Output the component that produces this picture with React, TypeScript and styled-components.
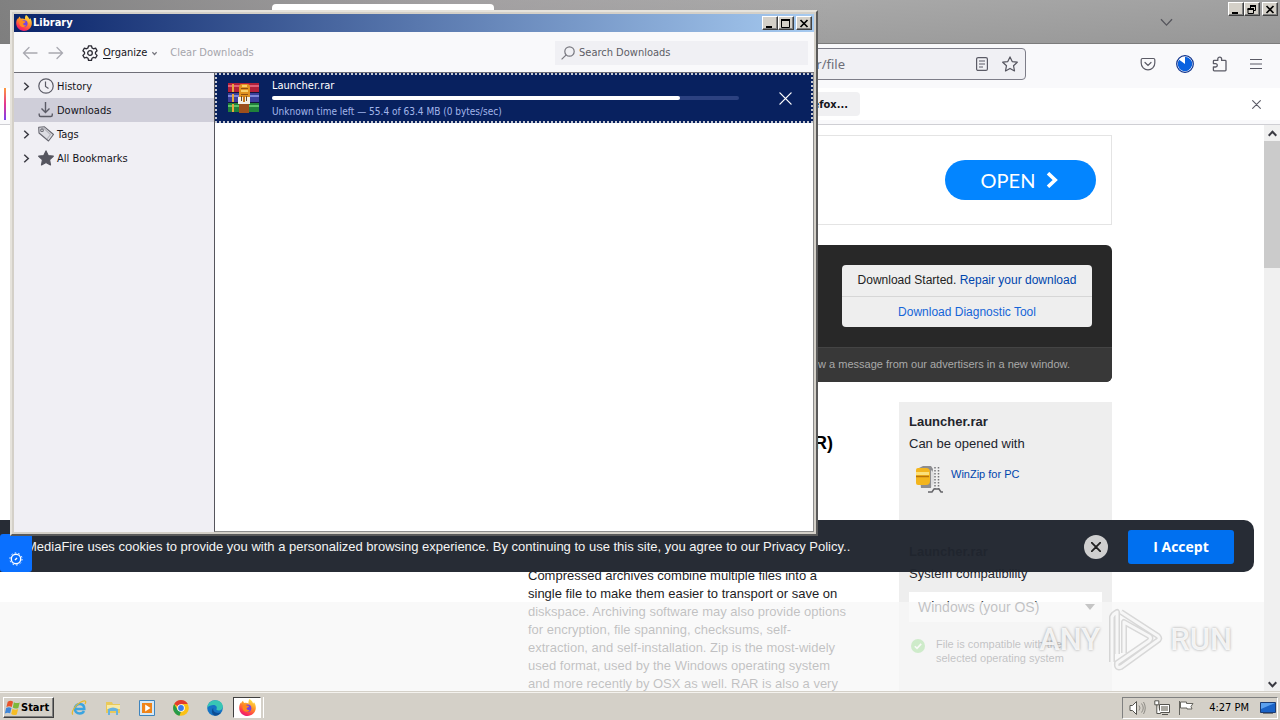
import React from 'react';
import styled, { createGlobalStyle, css } from 'styled-components';

const ui = `"DejaVu Sans Condensed", "Noto Sans", sans-serif`;
const web = `"Liberation Sans", Arial, sans-serif`;

const GlobalStyle = createGlobalStyle`
  *, *::before, *::after { box-sizing: border-box; }
  body { margin: 0; font: 11px/14px ${ui}; color: #15141a; }
  button, input, select { font: inherit; color: inherit; margin: 0; padding: 0; border: 0; background: none; border-radius: 0; }
  h1, h2, p, ul { margin: 0; padding: 0; }
  svg { display: block; flex: none; }
  a { text-decoration: none; }
`;

const Desktop = styled.div`
  position: relative;
  height: 100vh;
  display: flex;
  flex-direction: column;
  overflow: hidden;
  background: #fff;
`;

/* ---------- classic window buttons ---------- */
const ClassicButton = styled.button<{ $gap?: boolean }>`
  width: 16px;
  height: 14px;
  display: grid;
  place-items: center;
  background: #d4d0c8;
  border: 1px solid;
  border-color: #fff #404040 #404040 #fff;
  box-shadow: inset -1px -1px #808080;
  margin-left: ${p => (p.$gap ? '2px' : '0')};
`;
const Controls = styled.div`
  display: flex;
`;

/* ---------- browser ---------- */
const Browser = styled.main`
  flex: 1;
  min-height: 0;
  display: flex;
  flex-direction: column;
`;
const TabStrip = styled.header`
  height: 44px;
  flex: none;
  display: flex;
  justify-content: flex-end;
  align-items: flex-start;
  padding: 2px 2px 0 0;
  border-bottom: 1px solid #7c7c7c;
  background:
    linear-gradient(90deg, rgba(115, 115, 115, 0.8), rgba(150, 145, 148, 0.5) 35%, transparent 65%),
    linear-gradient(176deg, #b6b6b6, #979797);
`;
const ActiveTab = styled.div`
  width: 222px;
  height: 40px;
  margin: 2px auto 0 272px;
  background: #fff;
  border-radius: 4px;
`;
const TabsButton = styled.button`
  margin: 14px 55px 0 0;
`;
const NavBar = styled.nav`
  height: 44px;
  flex: none;
  display: flex;
  align-items: center;
  gap: 20px;
  padding: 0 16px 4px 255px;
  background: #f9f9fb;
`;
const UrlField = styled.label`
  flex: 1;
  height: 32px;
  display: flex;
  align-items: center;
  gap: 13px;
  padding: 0 7px;
  margin-right: 94px;
  border: 1px solid #7d7d88;
  border-radius: 4px;
  background: #f0f0f4;
  color: #5b5b66;
`;
const UrlInput = styled.input`
  flex: 1;
  min-width: 0;
  text-align: right;
  margin-right: 117px;
  font: 13px/18px "Noto Sans", sans-serif;
  color: #6e6e78;
  outline: 0;
`;
const IconButton = styled.button`
  width: 16px;
  height: 20px;
  display: grid;
  place-items: center;
  color: #5b5b66;
`;
const Notice = styled.div`
  height: 37px;
  flex: none;
  display: flex;
  justify-content: space-between;
  align-items: flex-start;
  padding: 0 16px 4px 4px;
  background: linear-gradient(#fff 32px, #f9f9fb 32px);
  border-bottom: 1px solid #cfcfd4;
`;
const NoticeStripe = styled.span`
  width: 2px;
  height: 32px;
  background: linear-gradient(#ff9a3c, #e5358f 50%, #7a3ff0);
`;
const NoticeBody = styled.div`
  width: 854px;
  display: flex;
  justify-content: flex-end;
  padding-top: 4px;
  margin-right: auto;
`;
const NoticeAction = styled.button`
  height: 24px;
  padding: 1px 12px 0;
  border-radius: 4px;
  background: #f0f0f2;
  font-weight: bold;
`;
const NoticeClose = styled(IconButton)`
  margin-top: 6px;
`;

/* ---------- web page ---------- */
const Viewport = styled.div`
  position: relative;
  flex: 1;
  min-height: 0;
  display: flex;
  overflow: hidden;
  background: #fff;
`;
const Page = styled.div`
  position: relative;
  flex: 1;
  overflow: hidden;
  font-family: ${web};
`;
const Container = styled.div`
  max-width: 960px;
  margin: 0 auto;
  padding-top: 10px;
`;
const Scrollbar = styled.div`
  width: 16px;
  display: flex;
  flex-direction: column;
  align-items: center;
  justify-content: space-between;
  background: #f0f0f0;
`;
const ScrollButton = styled.button`
  width: 16px;
  height: 16px;
  display: grid;
  place-items: center;
`;
const Thumb = styled.div`
  width: 16px;
  height: 127px;
  background: #cbcbcb;
  margin-bottom: auto;
`;
const Ad = styled.section`
  height: 90px;
  display: flex;
  align-items: center;
  justify-content: flex-end;
  padding-right: 15px;
  border: 1px solid #e4e4e4;
`;
const OpenButton = styled.button`
  width: 151px;
  height: 40px;
  display: flex;
  align-items: center;
  justify-content: center;
  gap: 9px;
  border-radius: 20px;
  background: #0385ff;
  color: #fff;
  font: 20px/24px Lato, sans-serif;
`;
const DownloadPanel = styled.section`
  margin-top: 20px;
  border-radius: 6px;
  overflow: hidden;
  background: #282828;
`;
const PanelTop = styled.div`
  height: 102px;
  padding: 20px 20px 0;
  display: flex;
  justify-content: flex-end;
`;
const StatusBox = styled.div`
  width: 250px;
  height: 62px;
  border-radius: 4px;
  background: #eee;
  text-align: center;
  font-size: 12px;
  line-height: 31px;
  color: #222;
  overflow: hidden;
`;
const StatusLine = styled.p<{ $rule?: boolean }>`
  ${p => p.$rule && css`
    line-height: 30px;
    border-top: 1px solid #d6d6d6;
  `}
`;
const Link = styled.a<{ $light?: boolean }>`
  color: ${p => (p.$light ? '#1565d8' : '#0045ad')};
`;
const PanelFoot = styled.p`
  height: 35px;
  padding-right: 42px;
  border-top: 1px solid #444;
  background: #383838;
  color: #a9a9a9;
  font-size: 11px;
  line-height: 32px;
  text-align: right;
`;
const Columns = styled.div`
  display: flex;
  justify-content: flex-end;
  gap: 51px;
  padding-top: 20px;
`;
const Article = styled.article`
  width: 320px;
  padding-top: 31px;
  font-size: 13px;
  line-height: 18px;
  color: #1c1c24;
`;
const ArticleTitle = styled.h1`
  padding-right: 15px;
  margin-bottom: 114px;
  text-align: right;
  font-size: 18px;
  line-height: 20px;
  color: #000;
`;
const Aside = styled.aside`
  width: 213px;
  height: 400px;
  padding: 9px 10px;
  background: #eee;
  font-size: 13px;
  line-height: 22px;
  color: #22242c;
`;
const AsideTitle = styled.h2`
  font-size: 13px;
  line-height: 22px;
`;
const AppRow = styled.div`
  height: 86px;
  display: flex;
  gap: 8px;
  padding: 10px 0 0 6px;
  font-size: 11px;
  line-height: 18px;
`;
const OsSelect = styled.div`
  display: flex;
  align-items: center;
  height: 30px;
  margin: 7px 0 15px;
  padding: 0 7px 0 9px;
  background: #fff;
  font-size: 14px;
  select { flex: 1; appearance: none; outline: 0; }
`;
const Compat = styled.div`
  display: flex;
  gap: 10px;
  padding-left: 1px;
  font-size: 11px;
  line-height: 14px;
`;
const Fade = styled.div`
  position: absolute;
  left: 0;
  right: 0;
  bottom: 0;
  height: 90px;
  background: rgba(247, 247, 247, 0.75);
`;
const CookieBar = styled.section`
  position: absolute;
  left: 0;
  right: 10px;
  bottom: 120px;
  height: 52px;
  display: flex;
  align-items: center;
  padding: 2px 20px 0 26px;
  border-radius: 0 10px 10px 0;
  background: rgba(32, 37, 46, 0.97);
  color: #f4f4f4;
`;
const CookieText = styled.p`
  flex: 1;
  font-size: 13px;
  line-height: 18px;
`;
const CookieClose = styled.button`
  width: 24px;
  height: 24px;
  display: grid;
  place-items: center;
  border-radius: 50%;
  background: #cfcfcf;
  margin-right: 20px;
`;
const Accept = styled.button`
  width: 106px;
  height: 34px;
  border-radius: 3px;
  background: #0070f0;
  color: #fff;
  font: bold 14px/18px "Open Sans", sans-serif;
`;
const PrivacyTab = styled.button`
  position: absolute;
  left: 0;
  bottom: 120px;
  width: 32px;
  height: 38px;
  display: grid;
  place-items: center;
  padding: 11px 1px 0 0;
  border-radius: 3px;
  background: #0a70ff;
`;
const Watermark = styled.div`
  position: absolute;
  right: 48px;
  bottom: 48px;
  display: flex;
  align-items: center;
  gap: 7px;
  z-index: 3;
  font: 500 31px/40px Roboto, sans-serif;
  color: rgba(255, 255, 255, 0.85);
  text-shadow: 0 0 3px rgba(0, 0, 0, 0.35);
`;

/* ---------- library window ---------- */
const Library = styled.section`
  position: absolute;
  left: 10px;
  top: 10px;
  width: 808px;
  height: 526px;
  display: flex;
  flex-direction: column;
  padding: 2px;
  border: 2px solid;
  border-color: #e6e3dc #5a5a5a #5a5a5a #e6e3dc;
  background: #d4d0c8;
  z-index: 2;
`;
const TitleBar = styled.header`
  height: 18px;
  flex: none;
  display: flex;
  align-items: center;
  gap: 1px;
  padding: 0 2px;
  background: linear-gradient(90deg, #0a246a, #a6caf0);
  color: #fff;
  font-weight: bold;
  h2 { flex: 1; font-size: 11px; line-height: 14px; }
`;
const Toolbar = styled.div`
  height: 41px;
  flex: none;
  display: flex;
  align-items: center;
  padding: 1px 6px 0 8px;
  background: #f9f9fb;
  border-bottom: 1px solid #6f6f78;
`;
const ToolButton = styled.button`
  display: flex;
  align-items: center;
  gap: 5px;
  margin-right: 10px;
  padding-top: 1px;
  &:disabled { color: #a5a5ab; }
  u { text-underline-offset: 2px; }
`;
const OrganizeButton = styled(ToolButton)`
  margin: 0 13px 0 8px;
`;
const Search = styled.label`
  width: 253px;
  height: 24px;
  margin-left: auto;
  display: flex;
  align-items: center;
  gap: 4px;
  padding: 0 6px;
  background: #f0f0f4;
`;
const SearchInput = styled.input`
  flex: 1;
  padding-top: 1px;
  outline: 0;
  &::placeholder { color: #5d5d66; opacity: 1; }
`;
const Body = styled.div`
  flex: 1;
  display: flex;
  min-height: 0;
`;
const Places = styled.nav`
  width: 200px;
  flex: none;
  padding-top: 1px;
  background: #f0eff4;
`;
const Place = styled.button<{ $selected?: boolean }>`
  width: 100%;
  height: 24px;
  display: flex;
  align-items: center;
  padding-left: 8px;
  background: ${p => (p.$selected ? '#cfced9' : 'transparent')};
`;
const Twisty = styled.span`
  width: 16px;
`;
const PlaceLabel = styled.span`
  margin-left: 3px;
  padding-top: 2px;
`;
const Downloads = styled.div`
  flex: 1;
  background: #fff;
  border: 1px solid #8d8d8d;
  border-left-color: #55555c;
  border-top: 0;
`;
const DownloadRow = styled.article`
  height: 50px;
  display: flex;
  align-items: center;
  padding: 0 18px 0 10px;
  border: 2px dotted #c3c7d2;
  background: #08215f;
  color: #fff;
`;
const DownloadInfo = styled.div`
  flex: 1;
  margin: 0 38px 0 12px;
  padding-top: 2px;
`;
const Track = styled.div`
  height: 4px;
  margin: 3px 0 5px;
  border-radius: 2px;
  background: #2c4180;
`;
const Fill = styled.div`
  height: 4px;
  border-radius: 2px;
  background: #fff;
`;
const DownloadStatus = styled.p`
  color: #a3b6ea;
  font-size: 10px;
`;

/* ---------- taskbar ---------- */
const Taskbar = styled.footer`
  height: 28px;
  flex: none;
  display: flex;
  align-items: center;
  padding: 2px 2px 0 3px;
  background: #d4d0c8;
  border-top: 1px solid #f4f2ee;
  box-shadow: 0 -1px #d4d0c8;
  z-index: 4;
`;
const StartButton = styled.button`
  height: 21px;
  width: 51px;
  display: flex;
  align-items: center;
  border: 1px solid;
  border-color: #fff #404040 #404040 #fff;
  box-shadow: inset -1px -1px #808080;
  font-weight: bold;
  color: #000;
`;
const QuickLaunch = styled.div`
  display: flex;
  gap: 18px;
  margin: 0 10px 0 17px;
`;
const TaskButton = styled.button`
  width: 28px;
  height: 21px;
  display: grid;
  place-items: center;
  background: #fff;
  border: 1px solid;
  border-color: #404040 #fff #fff #404040;
`;
const TaskStack = styled.span`
  width: 3px;
  height: 21px;
  border-right: 1px solid #fff;
`;
const Tray = styled.div`
  height: 22px;
  margin-left: auto;
  display: flex;
  align-items: center;
  gap: 8px;
  padding: 0 1px 0 6px;
  border: 1px solid;
  border-color: #808080 #fff #fff #808080;
  color: #000;
`;
const Clock = styled.time`
  margin: 0 3px 0 7px;
`;

/* ---------- icons ---------- */
const Firefox = ({ size = 16 }: { size?: number }) => (
  <svg width={size} height={size} viewBox="0 0 16 16">
    <defs>
      <linearGradient id="fx" x1="0.8" y1="0" x2="0.3" y2="1">
        <stop offset="0" stopColor="#fff04a" />
        <stop offset="0.45" stopColor="#ff9226" />
        <stop offset="0.8" stopColor="#ff3850" />
        <stop offset="1" stopColor="#e3157f" />
      </linearGradient>
    </defs>
    <path d="M10 0C12 1.500 13 3 13.300 4.200 14 3.600 14 3.200 14 2.800 15.400 4.600 16 6.600 15.800 9 15.400 13 12 16 8 16S.4 13 .2 8.600C.1 6.400.8 4.500 1.600 3.200l.3 1.200C2.200 3.300 3 2.300 3.900 1.600 3.900 2.600 4.300 3.300 5 3.700 6.500 3.400 8 3.600 9 4.300 8.800 2.800 9 1.200 10 0z" fill="url(#fx)" />
    <circle cx="8.200" cy="8.600" r="3.400" fill="#7542e5" />
    <path d="M3.500 6c1.500-1 3-.8 4 0 1 .2 2 .4 2 1-.5 1-2 .8-2.300 1.800C7 10 8.500 10.800 10 10c-.7 2-3 2.600-4.800 1.500C3.400 10.400 2.800 8 3.500 6z" fill="#ff8a1c" />
  </svg>
);
const Min = () => <svg width="10" height="9"><path d="M1 7h6v2H1z" fill="#000" /></svg>;
const Max = () => <svg width="10" height="9"><path d="M.5 1h8v7.500h-8zM0 1h9" fill="none" stroke="#000" strokeWidth="1" /><path d="M0 0h9v2H0z" /></svg>;
const Restore = () => <svg width="10" height="9"><path d="M3.500 3V1h5v4.500H7M1 4h5.500v4.500H1z" fill="none" stroke="#000" /><path d="M3 0h6v2H3zM.5 3H7v2H.5z" /></svg>;
const ClassicX = () => <svg width="10" height="9"><path d="M1.500 1l7 7m0-7l-7 7" stroke="#000" strokeWidth="1.700" /></svg>;
const Cross = ({ size = 10, color = '#5b5b66', w = 1.2 }: { size?: number; color?: string; w?: number }) => (
  <svg width={size} height={size} viewBox="0 0 10 10"><path d="M.7.7l8.600 8.600m0-8.600L.7 9.300" stroke={color} strokeWidth={w} strokeLinecap="round" /></svg>
);
const Arrow = ({ flip }: { flip?: boolean }) => (
  <svg width="16" height="14" viewBox="0 0 16 14"><path d={flip ? 'M1 7h13.500M9 1.500L14.500 7 9 12.500' : 'M15 7H1.500M7 1.500L1.500 7 7 12.500'} fill="none" stroke="#a9a9b0" strokeWidth="1.300" strokeLinecap="round" /></svg>
);
const Gear = () => (
  <svg width="16" height="16" viewBox="0 0 16 16" fill="none" stroke="#2b2a33" strokeWidth="1.300" strokeLinejoin="round">
    <path d="M6.500.8h3l.5 2.100 1.500.9 2.100-.7 1.500 2.600-1.600 1.500v1.700l1.600 1.500-1.500 2.600-2.100-.6-1.500.8-.5 2.100h-3L6 13.200l-1.500-.8-2.100.6-1.500-2.600 1.600-1.500V7.200L.9 5.700l1.500-2.600 2.100.7L6 2.900z" /><circle cx="8" cy="8" r="2.300" />
  </svg>
);
const Chevron = ({ d = 'right', w = 1.3, color = '#3a3a42', size = 8 }: { d?: 'right' | 'down' | 'up'; w?: number; color?: string; size?: number }) => (
  <svg width={size} height={size} viewBox="0 0 8 8"><path d={{ right: 'M2 .6L5.600 4 2 7.400', down: 'M.6 2L4 5.600 7.400 2', up: 'M.6 6L4 2.400 7.400 6' }[d]} fill="none" stroke={color} strokeWidth={w} /></svg>
);
const Clockface = () => <svg width="16" height="16" viewBox="0 0 16 16" fill="none" stroke="#5b5b66" strokeWidth="1.200"><circle cx="8" cy="8" r="7.200" /><path d="M7.500 3.500v5l3 2" /></svg>;
const DownloadIcon = () => <svg width="16" height="16" viewBox="0 0 16 16" fill="none" stroke="#5b5b66" strokeWidth="1.400"><path d="M7.500 0v10.500M3.500 6.500l4 4 4-4M1.200 11.500v1.500q0 1.500 1.500 1.500h10.100q1.500 0 1.500-1.500v-1.500" /></svg>;
const TagIcon = () => <svg width="16" height="16" viewBox="0 0 16 16" fill="#dcdce2" stroke="#66666f" strokeWidth="1.100" strokeLinejoin="round"><path d="M.7 1.200L6.500.8l9 7.700-5 6.500L1 7z" /><path d="M5 1.500l7.500 7-3.300 4.300" fill="none" stroke="#b4b4bb" /><circle cx="4" cy="4.200" r="1.300" fill="#fff" /></svg>;
const StarIcon = ({ filled }: { filled?: boolean }) => <svg width="16" height="16" viewBox="0 0 16 16" fill={filled ? '#55555f' : 'none'} stroke="#55555f" strokeWidth="1.200" strokeLinejoin="round"><path d="M8 .9l2.200 4.700 5.100.6-3.800 3.500 1 5.200L8 12.400l-4.500 2.500 1-5.200L.7 6.200l5.100-.6z" /></svg>;
const SearchIcon = () => <svg width="14" height="14" viewBox="0 0 14 14" fill="none" stroke="#77777f" strokeWidth="1.200"><circle cx="8.500" cy="5.500" r="4.700" /><path d="M5.200 8.800L.6 13.400" /></svg>;
const Reader = () => <svg width="14" height="16" viewBox="0 0 14 16" fill="none" stroke="#5b5b66" strokeWidth="1.200"><rect x="1.600" y="1.600" width="10.800" height="12.800" rx="1.500" /><path d="M4 5h6M4 8h6M4 11h4" /></svg>;
const Pocket = () => <svg width="16" height="16" viewBox="0 0 16 16" fill="none" stroke="#5b5b66" strokeWidth="1.200" strokeLinecap="round"><path d="M2.500 2.500h11q1.300 0 1.300 1.300V7a6.800 6.800 0 0 1-13.600 0V3.800q0-1.300 1.300-1.300z" /><path d="M5 6.500l3 3 3-3" /></svg>;
const Progress = () => <svg width="18" height="18" viewBox="0 0 18 18"><circle cx="9" cy="9" r="8.300" fill="#fff" stroke="#0b2f8a" strokeWidth="1.200" /><path d="M9 9V1.800A7.200 7.200 0 1 1 3.200 4.700z" fill="#0a62e0" /></svg>;
const Puzzle = () => <svg width="16" height="16" viewBox="0 0 16 16" fill="none" stroke="#5b5b66" strokeWidth="1.300" strokeLinejoin="round"><path d="M2.200 14.800q-.8 0-.8-.8v-3h2.200a1.700 1.700 0 0 0 0-3.400H1.400V5.200q0-.8.8-.8h3.600V3a1.900 1.900 0 0 1 3.800 0v1.400h3.600q.8 0 .8.8V14q0 .8-.8.8z" /></svg>;
const Menu = () => <svg width="14" height="12"><path d="M1 1.500h12M1 6h12M1 10.500h12" stroke="#5b5b66" strokeWidth="1.200" /></svg>;
const WinRar = () => (
  <svg width="33" height="32" viewBox="0 0 33 32">
    <path d="M1 1h31v10H1z" fill="#b3203a" /><path d="M1 3h31v2H1z" fill="#df6078" />
    <path d="M1 11h31v10H1z" fill="#3a3f9c" /><path d="M1 13h31v2H1z" fill="#7d86d8" />
    <path d="M1 21h31v9H1z" fill="#20813a" /><path d="M1 23h31v2H1z" fill="#5dc26b" />
    <path d="M1 10h31v1H1zM1 20h31v1H1z" fill="#12143a" />
    <path d="M5 2h2v8H5zM5 12h2v8H5zM5 22h2v8H5z" fill="#e8a63c" />
    <path d="M12 5q0-3 3-3h5q3 0 3 3v11H12z" fill="#e0921f" /><path d="M15 3h5v2h-5zM14 8h7v2h-7z" fill="#f8cf6a" /><path d="M14 6h7v1h-7zM14 12h7v1h-7z" fill="#8f4f12" />
    <path d="M12 22h10v9H12z" fill="#9c4f1c" />
    <path d="M11 15h12v7H11z" fill="#f2efe6" /><path d="M14 14h1v5h-1zM19 14h1v5h-1z" fill="#6c4a28" /><path d="M16 14h2v6h-2z" fill="#c9781a" />
  </svg>
);
const WinZip = () => (
  <svg width="28" height="30" viewBox="0 0 28 30">
    <path d="M4 3l4-2h8l2 3-2 19H6z" fill="#8d8d90" />
    <path d="M1 5q0-2 2-2h8q4 0 4 4v9q0 4-4 4H3q-2 0-2-2z" fill="#f3b51d" />
    <path d="M1 7h13v3H1z" fill="#fbe07a" /><path d="M1 11.500h13" stroke="#b97408" strokeWidth="1.500" />
    <path d="M16 5l3 3v10l-3 4z" fill="#dededf" />
    <path d="M20 2v22M23.500 2v22" stroke="#77777a" strokeWidth="1.500" strokeDasharray="1.500 1.500" />
    <path d="M13 27h4l2-3h5l2 3h2" fill="none" stroke="#66666a" strokeWidth="1.500" />
  </svg>
);
const Check = () => <svg width="16" height="16" viewBox="0 0 16 16"><circle cx="8" cy="9" r="7" fill="#56c846" /><path d="M4.800 9.200l2.200 2.200 4.200-4.500" fill="none" stroke="#fff" strokeWidth="1.600" /></svg>;
const Gearlet = () => <svg width="14" height="14" viewBox="0 0 14 14" fill="none" stroke="#fff"><circle cx="7" cy="7" r="4.700" strokeWidth="1.400" /><circle cx="7" cy="7" r="6.100" strokeWidth="1" strokeDasharray="1.600 2.200" /><path d="M6 8l2-2" strokeWidth="1.500" /></svg>;
const Play = () => (
  <svg width="56" height="64" viewBox="0 0 56 64" fill="none" strokeLinejoin="round">
    <path d="M5 54V9q1-3 5-5v42M14 4l37 24q3 3-1 5L14 59q-5 2-4-4l32-22q3-3 0-5L17 14v31" stroke="rgba(0,0,0,.13)" strokeWidth="6" />
    <path d="M5 54V9q1-3 5-5v42M14 4l37 24q3 3-1 5L14 59q-5 2-4-4l32-22q3-3 0-5L17 14v31" stroke="rgba(255,255,255,.8)" strokeWidth="3" />
  </svg>
);
const WindowsFlag = () => <svg width="17" height="16" viewBox="0 0 16 15"><path d="M3.500 1.500q3-1.500 5 0L7.300 6.500q-2.500-1.400-5 0z" fill="#e8532a" /><path d="M9.300 2q2.500 1.500 5.500.3L13.500 7.500q-3 1.200-5.200-.4z" fill="#7db83a" /><path d="M2 7.500q2.700-1.300 5 0L5.800 12.500q-2.500-1.300-5 .2z" fill="#3f86d8" /><path d="M8 8.200q2.500 1.500 5.300.3L12 13.500q-3 1.200-5.200-.4z" fill="#f6bd25" /></svg>;
const IE = () => <svg width="16" height="16" viewBox="0 0 16 16" fill="none"><path d="M3.500 9h9.800c0-3.300-2-5-4.600-5S3.800 6 3.800 8.800s2 4.700 4.900 4.700c2 0 3.500-.9 4.300-2.500" stroke="#3ba4e0" strokeWidth="2.500" /><path d="M2 14.500C-.5 13 4 5.500 9 2.500s7-1.500 5 1.500" stroke="#e8b92c" strokeWidth="1.200" /></svg>;
const Explorer = () => <svg width="16" height="16" viewBox="0 0 16 16"><path d="M1 2h6l1 2h7v9H1z" fill="#e9c95a" /><path d="M2 5h13v4H2z" fill="#f8e9a4" /><path d="M3 9q5-3 10 0v6h-2v-4H5v4H3z" fill="#67b3e0" /></svg>;
const Media = () => <svg width="16" height="16" viewBox="0 0 16 16"><path d="M.5.500h15v15H.5z" fill="#d6e8f6" stroke="#3f84bd" /><path d="M3 3h10v10H3z" fill="#f08418" /><path d="M6.200 4.500v7L11.500 8z" fill="#fff" /></svg>;
const Chrome = () => <svg width="16" height="16" viewBox="0 0 16 16"><circle cx="8" cy="8" r="7.800" fill="#fbc116" /><path d="M8 8L1.200 4A7.800 7.800 0 0 1 14.800 4H8z" fill="#e33b2e" /><path d="M1.200 4l3.500 6 3.200 1.800L6.500 15.700A7.800 7.800 0 0 1 1.200 4z" fill="#269b49" /><circle cx="8" cy="8" r="3.800" fill="#fff" /><circle cx="8" cy="8" r="2.900" fill="#3b7bea" /></svg>;
const Edge = () => <svg width="16" height="16" viewBox="0 0 16 16"><circle cx="8" cy="8" r="7.800" fill="#1673c4" /><path d="M.3 8C.5 3 4 .2 8.300.2c4.500 0 7.500 3 7.500 6.300 0 2.500-1.800 4-4 4-1.800 0-2.800-.8-2.200-1.700C10.500 6.500 8.500 4.800 6 5 3 5.300.8 6.500.3 8z" fill="#38c6b4" /><path d="M6.300 8c-.8 3.500 2.500 6 7.500 4.500-1 1.800-3 3.200-5.800 3.300C4.500 14.500 4 10 6.300 8z" fill="#0d4d93" /></svg>;
const Speaker = () => <svg width="17" height="16" viewBox="0 0 17 16" stroke="#55544f" fill="#fff"><path d="M1 5.500h2.500l4-4v13l-4-4H1z" /><path d="M10 5.500q2 2.500 0 5M12.500 3.500q3.500 4.500 0 9M14.500 2q3.500 6 0 12" fill="none" stroke="#8d8b85" /></svg>;
const Network = () => <svg width="16" height="16" viewBox="0 0 16 16" stroke="#55544f" fill="#fff"><path d="M5.500 4.500h10v8h-10z" /><path d="M7 6h7v5H7z" fill="#a9a7a0" stroke="none" /><path d="M.8.800h4v4h-4zM2.800 5v8.500h4M8 14.500h6" /></svg>;
const Flag = () => <svg width="16" height="16" viewBox="0 0 16 16" stroke="#66655f" fill="#fff"><path d="M1.500 1v14M2.500 2h6v1.500h6.500l-2 3 1 2.500h-5V8h-6.500z" /></svg>;
const Monitor = () => <svg width="16" height="14" viewBox="0 0 16 14"><path d="M.5 1.500h15v10H.5z" fill="#1b63c6" stroke="#1b3c74" /><path d="M1 2h14L1 8z" fill="#5ba0ee" /><path d="M3 12.500h10" stroke="#777" /></svg>;

const places = [
  { name: 'History', icon: <Clockface />, open: true },
  { name: 'Downloads', icon: <DownloadIcon />, open: false },
  { name: 'Tags', icon: <TagIcon />, open: true },
  { name: 'All Bookmarks', icon: <StarIcon filled />, open: true },
];

function LibraryWindow() {
  const done = 55.4;
  const total = 63.4;
  return (
    <Library aria-label="Library">
      <TitleBar>
        <Firefox />
        <h2>Library</h2>
        <Controls>
          <ClassicButton aria-label="Minimize"><Min /></ClassicButton>
          <ClassicButton aria-label="Maximize"><Max /></ClassicButton>
          <ClassicButton $gap aria-label="Close"><ClassicX /></ClassicButton>
        </Controls>
      </TitleBar>
      <Toolbar>
        <ToolButton disabled aria-label="Back"><Arrow /></ToolButton>
        <ToolButton disabled aria-label="Forward"><Arrow flip /></ToolButton>
        <OrganizeButton><Gear /><span><u>O</u>rganize</span><Chevron d="down" size={5} color="#77777f" w={2} /></OrganizeButton>
        <ToolButton disabled>Clear Downloads</ToolButton>
        <Search><SearchIcon /><SearchInput placeholder="Search Downloads" aria-label="Search Downloads" /></Search>
      </Toolbar>
      <Body>
        <Places>
          {places.map(p => (
            <Place key={p.name} $selected={p.name === 'Downloads'}>
              <Twisty>{p.open && <Chevron size={9} />}</Twisty>
              {p.icon}
              <PlaceLabel>{p.name}</PlaceLabel>
            </Place>
          ))}
        </Places>
        <Downloads>
          <DownloadRow>
            <WinRar />
            <DownloadInfo>
              <p>Launcher.rar</p>
              <Track role="progressbar" aria-label="Download progress" aria-valuenow={done} aria-valuemax={total}>
                <Fill style={{ width: `${(done / total) * 100}%` }} />
              </Track>
              <DownloadStatus>Unknown time left — {done} of {total} MB (0 bytes/sec)</DownloadStatus>
            </DownloadInfo>
            <IconButton aria-label="Cancel"><Cross size={13} color="#fff" w={1} /></IconButton>
          </DownloadRow>
        </Downloads>
      </Body>
    </Library>
  );
}

function WebPage() {
  return (
    <Page>
      <Container>
        <Ad><OpenButton>OPEN <Chevron size={16} w={1.8} color="#fff" /></OpenButton></Ad>
        <DownloadPanel>
          <PanelTop>
            <StatusBox>
              <StatusLine>Download Started. <Link href="#repair">Repair your download</Link></StatusLine>
              <StatusLine $rule><Link $light href="#tool">Download Diagnostic Tool</Link></StatusLine>
            </StatusBox>
          </PanelTop>
          <PanelFoot>w a message from our advertisers in a new window.</PanelFoot>
        </DownloadPanel>
        <Columns>
          <Article>
            <ArticleTitle>R)</ArticleTitle>
            <p>Compressed archives combine multiple files into a single file to make them easier to transport or save on diskspace. Archiving software may also provide options for encryption, file spanning, checksums, self-extraction, and self-installation. Zip is the most-widely used format, used by the Windows operating system and more recently by OSX as well. RAR is also a very</p>
          </Article>
          <Aside>
            <AsideTitle>Launcher.rar</AsideTitle>
            <p>Can be opened with</p>
            <AppRow><WinZip /><Link href="#winzip">WinZip for PC</Link></AppRow>
            <AsideTitle>Launcher.rar</AsideTitle>
            <p>System compatibility</p>
            <OsSelect>
              <select aria-label="Operating system"><option>Windows (your OS)</option></select>
              <svg width="10" height="6"><path d="M0 0h10L5 6z" fill="#333" /></svg>
            </OsSelect>
            <Compat><Check /><p>File is compatible with the<br />selected operating system</p></Compat>
          </Aside>
        </Columns>
      </Container>
      <Fade />
      <CookieBar>
        <CookieText>MediaFire uses cookies to provide you with a personalized browsing experience. By continuing to use this site, you agree to our Privacy Policy..</CookieText>
        <CookieClose aria-label="Dismiss"><Cross color="#222" w={1.8} /></CookieClose>
        <Accept>I Accept</Accept>
      </CookieBar>
      <PrivacyTab aria-label="Privacy settings"><Gearlet /></PrivacyTab>
    </Page>
  );
}

export default function App() {
  return (
    <Desktop>
      <GlobalStyle />
      <Browser>
        <TabStrip>
          <ActiveTab />
          <TabsButton aria-label="List all tabs"><Chevron d="down" size={13} w={0.8} color="#55555c" /></TabsButton>
          <Controls>
            <ClassicButton aria-label="Minimize browser"><Min /></ClassicButton>
            <ClassicButton aria-label="Restore browser"><Restore /></ClassicButton>
            <ClassicButton $gap aria-label="Close browser"><ClassicX /></ClassicButton>
          </Controls>
        </TabStrip>
        <NavBar>
          <UrlField>
            <UrlInput aria-label="Address" defaultValue="r/file" />
            <Reader />
            <StarIcon />
          </UrlField>
          <IconButton aria-label="Pocket"><Pocket /></IconButton>
          <IconButton aria-label="Downloads progress"><Progress /></IconButton>
          <IconButton aria-label="Extensions"><Puzzle /></IconButton>
          <IconButton aria-label="Menu"><Menu /></IconButton>
        </NavBar>
        <Notice>
          <NoticeStripe />
          <NoticeBody><NoticeAction>efox...</NoticeAction></NoticeBody>
          <NoticeClose aria-label="Close notice"><Cross size={9} /></NoticeClose>
        </Notice>
        <Viewport>
          <WebPage />
          <Scrollbar>
            <ScrollButton aria-label="Scroll up"><Chevron d="up" size={9} w={1.8} /></ScrollButton>
            <Thumb />
            <ScrollButton aria-label="Scroll down"><Chevron d="down" size={9} w={1.8} /></ScrollButton>
          </Scrollbar>
        </Viewport>
      </Browser>
      <LibraryWindow />
      <Watermark aria-hidden="true"><span>ANY</span><Play /><span>RUN</span></Watermark>
      <Taskbar>
        <StartButton><WindowsFlag />Start</StartButton>
        <QuickLaunch><IE /><Explorer /><Media /><Chrome /><Edge /></QuickLaunch>
        <TaskButton aria-label="Firefox"><Firefox size={17} /></TaskButton>
        <TaskStack />
        <Tray><Speaker /><Network /><Flag /><Clock>4:27 PM</Clock><Monitor /></Tray>
      </Taskbar>
    </Desktop>
  );
}
